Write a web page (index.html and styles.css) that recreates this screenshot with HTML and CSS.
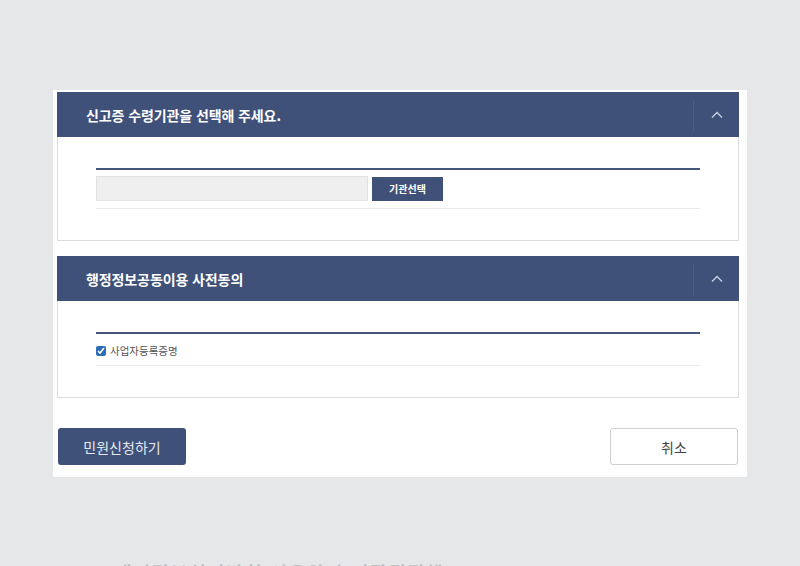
FILE: index.html
```html
<!DOCTYPE html>
<html lang="ko">
<head>
    <meta charset="UTF-8">
    <meta name="viewport" content="width=device-width, initial-scale=1.0">
    <title>민원신청</title>
    <link rel="stylesheet" href="styles.css">
</head>
<body>
    <div class="panel">
        <section class="box">
            <div class="box-head">
                <h2>신고증 수령기관을 선택해 주세요.</h2>
                <button type="button" class="toggle" aria-label="접기">
                    <svg width="12" height="8" viewBox="0 0 12 8"><path d="M1 6.5 L6 1.5 L11 6.5" fill="none" stroke="#c9d0de" stroke-width="1.4"/></svg>
                </button>
            </div>
            <div class="box-body">
                <div class="field-row">
                    <input type="text" class="org-input" readonly>
                    <button type="button" class="btn-small">기관선택</button>
                </div>
            </div>
        </section>

        <section class="box">
            <div class="box-head">
                <h2>행정정보공동이용 사전동의</h2>
                <button type="button" class="toggle" aria-label="접기">
                    <svg width="12" height="8" viewBox="0 0 12 8"><path d="M1 6.5 L6 1.5 L11 6.5" fill="none" stroke="#c9d0de" stroke-width="1.4"/></svg>
                </button>
            </div>
            <div class="box-body">
                <div class="field-row check-row">
                    <input type="checkbox" id="bizCert" checked>
                    <label for="bizCert">사업자등록증명</label>
                </div>
            </div>
        </section>

        <div class="actions">
            <button type="button" class="btn-primary">민원신청하기</button>
            <button type="button" class="btn-cancel">취소</button>
        </div>
    </div>
    <div class="footer-peek">개인정보처리방침 이용약관 저작권정책</div>
</body>
</html>
```

FILE: styles.css
```css
* { box-sizing: border-box; }
body { margin: 0; background: #e6e7e9; font-family: "Noto Sans CJK KR", "Noto Sans", sans-serif; height: 566px; overflow: hidden; }
.panel { width: 694px; margin: 90px 0 0 53px; background: #fff; padding: 2px 8px 12px 4px; }
.box { border: 1px solid #dcdcdc; border-top: none; background: #fff; }
.box + .box { margin-top: 15px; }
.box-head { height: 45px; background: #3f5179; display: flex; align-items: center; justify-content: space-between; margin: 0 -1px; }
.box-head h2 { margin: 0; padding-left: 29px; color: #fff; font-size: 14px; font-weight: bold; letter-spacing: -0.1px; }
.toggle { width: 46px; height: 32px; border: none; border-left: 1px solid #4b5d84; background: transparent; display: flex; align-items: center; justify-content: center; padding: 0; cursor: pointer; }
.box-body { padding: 31px 38px 31px 38px; }
.field-row { border-top: 2px solid #45567c; border-bottom: 1px solid #e9e9e9; padding: 6px 0 7px; display: flex; align-items: center; }
.org-input { width: 272px; height: 25px; background: #efefef; border: 1px solid #e2e2e2; margin: 0; }
.btn-small { margin-left: 4px; width: 71px; height: 24px; background: #3f5179; color: #fff; border: none; font-family: inherit; font-size: 10px; font-weight: bold; padding: 0; }
.check-row { padding: 10px 0 7px; }
.check-row input { width: 10px; height: 10px; margin: 0 4px 0 0; accent-color: #2d6db5; }
.check-row label { font-size: 10.5px; color: #555; line-height: 14px; }
.actions { display: flex; justify-content: space-between; margin-top: 30px; padding-left: 1px; padding-right: 1px; }
.btn-primary, .btn-cancel { width: 128px; height: 37px; border-radius: 3px; font-family: inherit; font-size: 14px; cursor: pointer; }
.btn-primary { background: #3f5179; color: #e6e9f0; border: none; }
.btn-cancel { background: #fff; color: #444; border: 1px solid #cfcfcf; }
.footer-peek { margin: 82px 0 0 115px; font-size: 18px; font-weight: bold; color: #bfc0c2; letter-spacing: 2px; white-space: nowrap; }
```
